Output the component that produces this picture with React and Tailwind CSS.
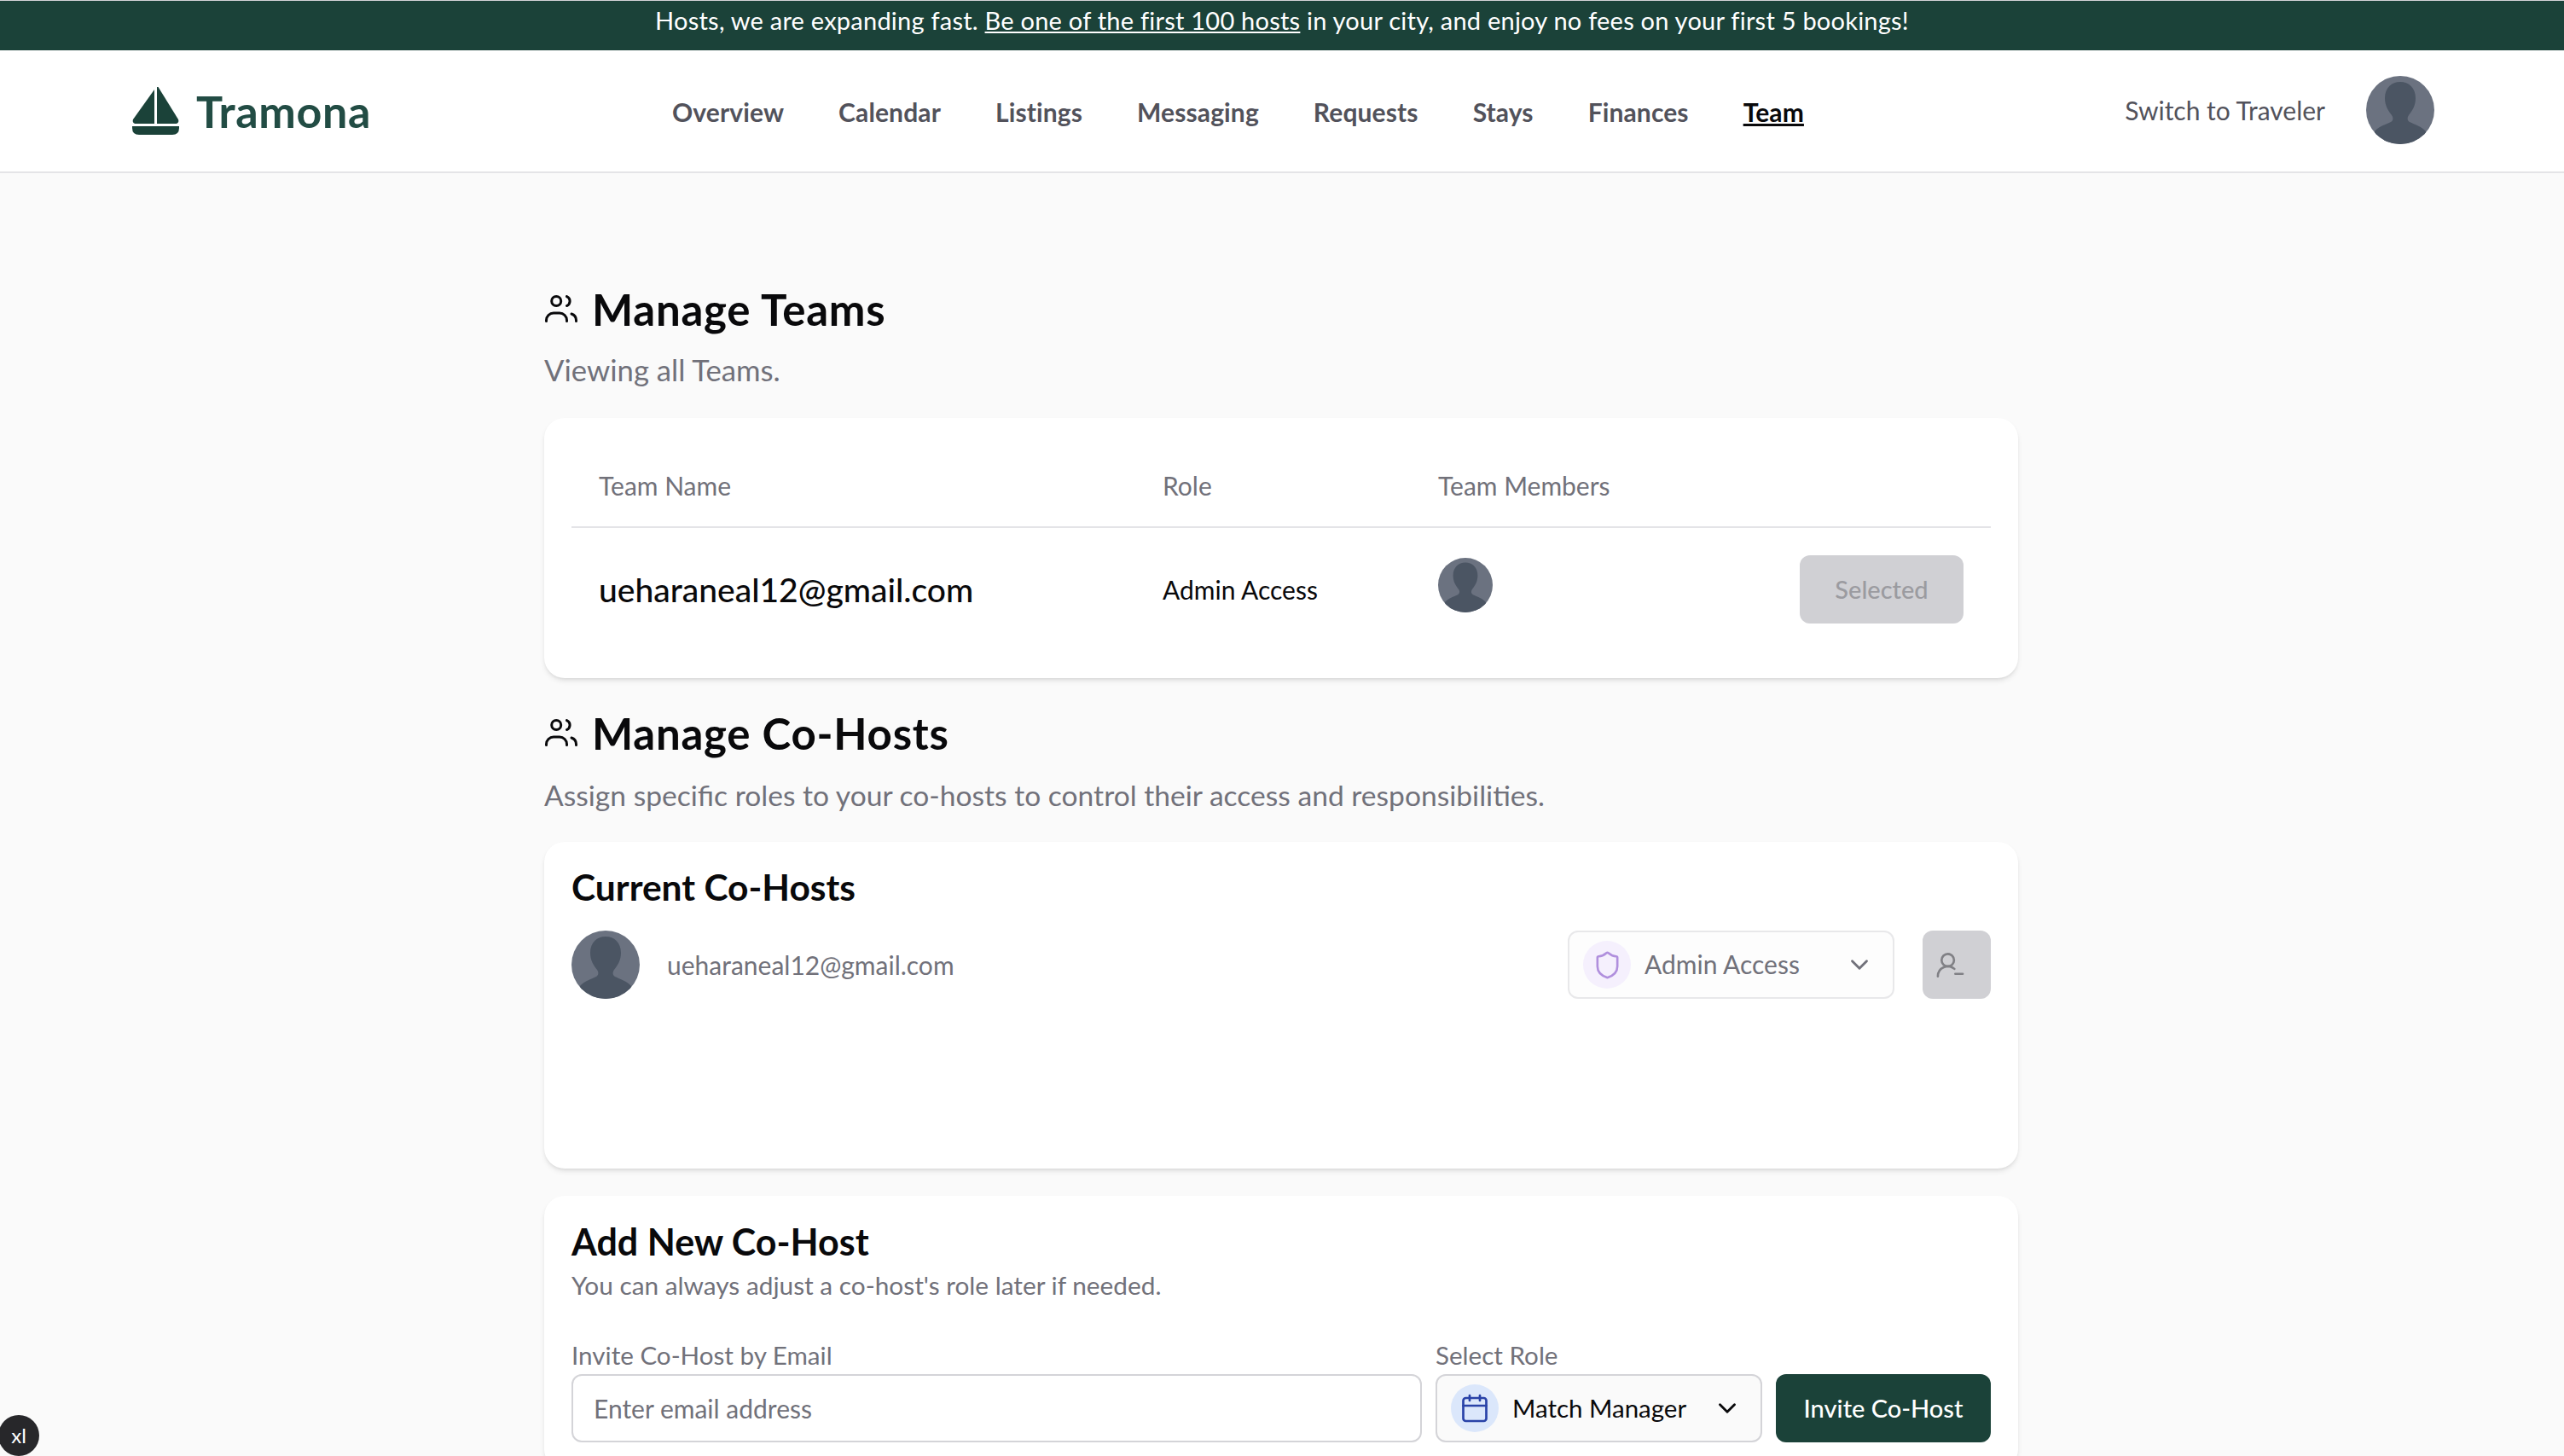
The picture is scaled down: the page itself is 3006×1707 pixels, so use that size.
import { ChevronDown, Shield, UserRoundMinus, Calendar } from "lucide-react";

const navItems = ["Overview", "Calendar", "Listings", "Messaging", "Requests", "Stays", "Finances"];

function Avatar({ className }) {
  return (
    <div className={`rounded-full overflow-hidden bg-[#6b7280] shrink-0 ${className}`}>
      <svg viewBox="0 0 80 80" className="w-full h-full block">
        <path
          fill="#4b5563"
          d="M40 7c-10 0-18 7-18 19 0 9 4 15 8 20 2 3 2 6-1 8-6 3-14 5-19 11l-4 15h68l-4-15c-5-6-13-8-19-11-3-2-3-5-1-8 4-5 8-11 8-20C58 14 50 7 40 7z"
        />
      </svg>
    </div>
  );
}

function TeamIcon() {
  return (
    <svg
      viewBox="0 0 38 32"
      fill="none"
      stroke="#09090b"
      strokeWidth="3"
      strokeLinecap="round"
      className="w-[38px] h-[32px] ml-px -mt-[2px] shrink-0"
    >
      <circle cx="13.200" cy="7" r="5.500" />
      <path d="M1.500 30.500v-1a8.500 8.500 0 0 1 8.500-8.500h7a8.500 8.500 0 0 1 8.500 8.500v1" />
      <path d="M25.500 1.500a6 6 0 0 1 0 11" />
      <path d="M31 22a8 8 0 0 1 5.500 7.500v1" />
    </svg>
  );
}

function SectionHeading({ children }) {
  return (
    <div className="flex items-center h-16">
      <TeamIcon />
      <h1 className="ml-[17px] text-[51px] font-bold text-[#09090b] tracking-[0.015em]">{children}</h1>
    </div>
  );
}

export default function App() {
  return (
    <div
      className="h-[1707px] overflow-hidden bg-[#fafafa] relative"
      style={{ fontFamily: "Lato, 'Noto Sans', sans-serif" }}
    >
      {/* Banner */}
      <div className="h-[59px] border-t border-[#d4d4d8] bg-[#1b4239] text-white text-[29px] flex items-center justify-center tracking-[0.008em] pb-[13px]">
        <span>
          Hosts, we are expanding fast. <u>Be one of the first 100 hosts</u> in your city, and enjoy no fees on your
          first 5 bookings!
        </span>
      </div>

      {/* Navbar */}
      <header className="h-[144px] bg-white border-b-2 border-[#e4e4e7] flex items-center relative">
        <div className="flex items-center ml-[155px] w-[633px]">
          <svg viewBox="0 0 55 56" className="w-[55px] h-[56px] shrink-0">
            <path fill="#1b4239" d="M29 0h1.500L54 38q1.500 5-4 5H29z" />
            <path fill="#1b4239" d="M26 3v40H5q-5.500 0-4-5z" />
            <path fill="#1b4239" d="M0 46h55v2q0 8-8 8H8q-8 0-8-8z" />
          </svg>
          <span className="ml-[20px] text-[52px] font-bold text-[#224c44] tracking-[0.012em]">Tramona</span>
        </div>
        <nav className="flex items-center gap-[64px] text-[30px] font-bold text-[#52525b] tracking-[0.004em] mt-[2px]">
          {navItems.map((item) => (
            <a key={item}>{item}</a>
          ))}
          <a className="text-[#09090b] underline">Team</a>
        </nav>
        <div className="ml-auto flex items-center mr-[152px] gap-[48px] -mt-[2px]">
          <span className="text-[30px] text-[#52525b]">Switch to Traveler</span>
          <Avatar className="w-20 h-20" />
        </div>
      </header>

      <main className="w-[1728px] ml-[638px] pt-[128px]">
        {/* Manage Teams */}
        <SectionHeading>Manage Teams</SectionHeading>
        <p className="mt-[15px] h-12 leading-[48px] text-[34.700px] text-[#71717a]">Viewing all Teams.</p>
        <section className="mt-[32px] bg-white rounded-3xl shadow-md p-8 h-[305px]">
          <div className="grid grid-cols-[661px_323px_1fr] h-[97px] border-b-2 border-[#e4e4e7] px-8 items-center text-[30px] text-[#71717a]">
            <span>Team Name</span>
            <span>Role</span>
            <span>Team Members</span>
          </div>
          <div className="grid grid-cols-[661px_323px_1fr] h-[144px] px-8 items-center">
            <span className="text-[39px] font-medium text-[#09090b]">ueharaneal12@gmail.com</span>
            <span className="text-[30px] text-[#09090b]">Admin Access</span>
            <div className="flex items-center justify-between">
              <Avatar className="w-16 h-16 -mt-[10px]" />
              <button className="w-[192px] h-20 rounded-xl bg-[#d0d0d4] text-[#9b9ba0] text-[29px] font-medium">
                Selected
              </button>
            </div>
          </div>
        </section>

        {/* Manage Co-Hosts */}
        <div className="mt-[33px]">
          <SectionHeading>Manage Co-Hosts</SectionHeading>
        </div>
        <p className="mt-[16px] h-12 leading-[48px] text-[33.600px] text-[#71717a]">
          Assign specific roles to your co-hosts to control their access and responsibilities.
        </p>

        <section className="mt-[31px] bg-white rounded-3xl shadow-md px-8 pt-[25px] h-[383px]">
          <h2 className="h-14 leading-[56px] text-[42.500px] font-bold text-[#09090b]">Current Co-Hosts</h2>
          <div className="mt-[23px] flex items-center">
            <Avatar className="w-20 h-20" />
            <span className="ml-8 text-[30px] text-[#71717a]">ueharaneal12@gmail.com</span>
            <div className="ml-auto w-[383px] h-20 rounded-xl border-2 border-[#e8e8ea] bg-[#fdfdfd] flex items-center pl-4 pr-[22px]">
              <div className="w-14 h-14 rounded-full bg-[#f5f0fd] flex items-center justify-center">
                <Shield className="w-[35px] h-[35px] text-[#b08fdd]" strokeWidth={1.8} />
              </div>
              <span className="ml-4 text-[30px] text-[#71717a] -mt-px">Admin Access</span>
              <ChevronDown className="ml-auto w-[34px] h-[34px] text-[#71717a]" strokeWidth={2} />
            </div>
            <button className="ml-[33px] w-20 h-20 rounded-xl bg-[#d0d0d4] flex items-center justify-center">
              <UserRoundMinus className="w-[35px] h-[35px] text-[#808085] mr-[15px]" strokeWidth={1.8} />
            </button>
          </div>
        </section>

        {/* Add New Co-Host */}
        <section className="mt-[32px] bg-white rounded-3xl shadow-md px-8 pt-[26px] pb-8">
          <h2 className="h-14 leading-[56px] text-[43px] font-bold text-[#09090b]">Add New Co-Host</h2>
          <p className="mt-[3px] h-10 leading-[40px] text-[29.800px] text-[#71717a]">
            You can always adjust a co-host's role later if needed.
          </p>
          <div className="mt-[43px] flex gap-[16px] items-end">
            <label className="flex-1 block">
              <span className="block h-10 leading-[40px] text-[29.600px] text-[#71717a] -mt-px">
                Invite Co-Host by Email
              </span>
              <input
                placeholder="Enter email address"
                className="mt-[2px] w-full h-20 rounded-xl border-2 border-[#d4d4d8] bg-white px-6 text-[30px] placeholder:text-[#71717a]"
              />
            </label>
            <div className="w-[383px]">
              <span className="block h-10 leading-[40px] text-[29.600px] text-[#71717a] -mt-px">Select Role</span>
              <div className="mt-[2px] h-20 rounded-xl border-2 border-[#d4d4d8] bg-[#fafafa] flex items-center pl-4 pr-[22px]">
                <div className="w-14 h-14 rounded-full bg-[#dbe7fb] flex items-center justify-center">
                  <Calendar className="w-9 h-9 text-[#2a43a8]" strokeWidth={1.8} />
                </div>
                <span className="ml-4 text-[29.500px] text-[#09090b]">Match Manager</span>
                <ChevronDown className="ml-auto w-[34px] h-[34px] text-[#09090b]" strokeWidth={2} />
              </div>
            </div>
            <button className="w-[252px] h-20 rounded-xl bg-[#1b4239] text-white text-[29px] font-medium">
              Invite Co-Host
            </button>
          </div>
        </section>
      </main>

      {/* Breakpoint badge */}
      <div className="absolute left-[-2px] bottom-0 w-12 h-12 rounded-full bg-[#27272a] text-white text-[24px] flex items-center justify-center">
        xl
      </div>
    </div>
  );
}
